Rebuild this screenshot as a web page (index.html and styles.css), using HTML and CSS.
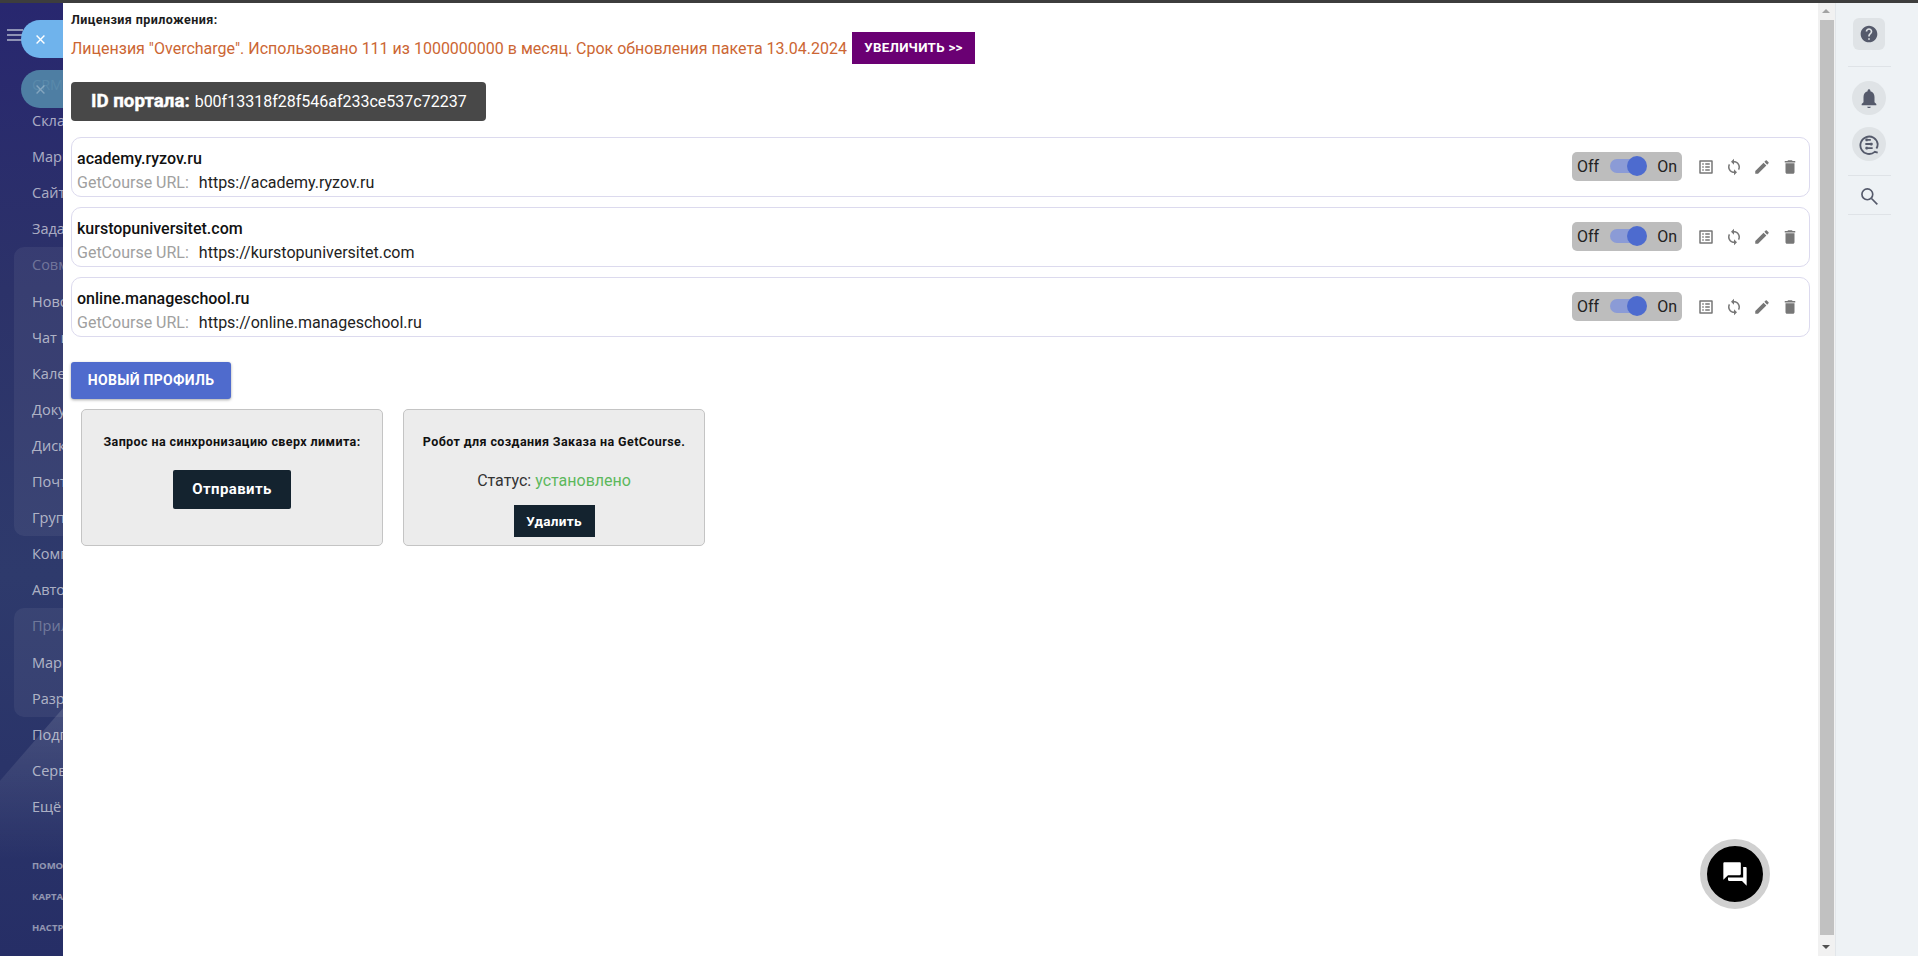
FILE: index.html
```html
<!DOCTYPE html>
<html lang="ru">
<head>
<meta charset="utf-8">
<title>Профили</title>
<link rel="stylesheet" href="styles.css">
</head>
<body>
<div class="topbar"></div>
<div class="app">
  <aside class="sidebar">
    <div class="side-shine"></div>
    <div class="burger"><i></i><i></i><i></i></div>
    <nav class="side-nav">
      <div class="side-item faint">CRM</div>
      <div class="side-item">Склад</div>
      <div class="side-item">Маркетинг</div>
      <div class="side-item">Сайты</div>
      <div class="side-item">Задачи</div>
      <div class="side-group">
        <div class="side-item dim">Совместная</div>
        <div class="side-item">Новости</div>
        <div class="side-item">Чат и звонки</div>
        <div class="side-item">Календарь</div>
        <div class="side-item">Документы</div>
        <div class="side-item">Диск</div>
        <div class="side-item">Почта</div>
        <div class="side-item">Группы</div>
      </div>
      <div class="side-item">Компания</div>
      <div class="side-item">Автоматизация</div>
      <div class="side-group short">
        <div class="side-item dim">Приложения</div>
        <div class="side-item">Маркет</div>
        <div class="side-item">Разработчикам</div>
      </div>
      <div class="side-item">Подписка</div>
      <div class="side-item">Сервисы</div>
      <div class="side-item">Ещё</div>
      <div class="side-links">
        <div class="side-link">ПОМОЩЬ</div>
        <div class="side-link">КАРТА САЙТА</div>
        <div class="side-link">НАСТРОЙКИ</div>
      </div>
    </nav>
    <div class="pill pill-a"><svg viewBox="0 0 14 14" class="x"><path d="M2 2l10 10M12 2L2 12"/></svg></div>
    <div class="pill pill-b"><svg viewBox="0 0 14 14" class="x"><path d="M2 2l10 10M12 2L2 12"/></svg></div>
  </aside>

  <main class="panel">
    <div class="lic-label">Лицензия приложения:</div>
    <div class="lic-line">
      <span class="lic-text">Лицензия "Overcharge". Использовано 111 из 1000000000 в месяц. Срок обновления пакета 13.04.2024</span>
      <span class="upgrade">УВЕЛИЧИТЬ &gt;&gt;</span>
    </div>
    <div class="portal"><b>ID портала:</b> b00f13318f28f546af233ce537c72237</div>

    <section class="row">
      <div class="row-info">
        <div class="row-name">academy.ryzov.ru</div>
        <div class="row-url"><span class="url-label">GetCourse URL:</span><span>https://academy.ryzov.ru</span></div>
      </div>
      <div class="switch-box"><span>Off</span><span class="switch"><i></i></span><span>On</span></div>
      <div class="actions">
        <svg viewBox="0 0 24 24"><path d="M19 5v14H5V5h14m1.1-2H3.9c-.5 0-.9.4-.9.9v16.2c0 .4.4.9.9.9h16.2c.4 0 .9-.5.9-.9V3.9c0-.5-.5-.9-.9-.9zM11 7h6v2h-6V7zm0 4h6v2h-6v-2zm0 4h6v2h-6zM7 7h2v2H7zm0 4h2v2H7zm0 4h2v2H7z"/></svg>
        <svg viewBox="0 0 24 24"><path d="M12 4V1L8 5l4 4V6c3.31 0 6 2.69 6 6 0 1.01-.25 1.97-.7 2.8l1.46 1.46C19.54 15.03 20 13.57 20 12c0-4.42-3.58-8-8-8zm0 14c-3.31 0-6-2.69-6-6 0-1.01.25-1.97.7-2.8L5.24 7.74C4.46 8.97 4 10.43 4 12c0 4.42 3.58 8 8 8v3l4-4-4-4v3z"/></svg>
        <svg viewBox="0 0 24 24"><path d="M3 17.25V21h3.75L17.81 9.94l-3.75-3.75L3 17.25zM20.71 7.04c.39-.39.39-1.02 0-1.41l-2.34-2.34c-.39-.39-1.02-.39-1.41 0l-1.83 1.83 3.75 3.75 1.83-1.83z"/></svg>
        <svg viewBox="0 0 24 24"><path d="M6 19c0 1.1.9 2 2 2h8c1.1 0 2-.9 2-2V7H6v12zM19 4h-3.5l-1-1h-5l-1 1H5v2h14V4z"/></svg>
      </div>
    </section>

    <section class="row">
      <div class="row-info">
        <div class="row-name">kurstopuniversitet.com</div>
        <div class="row-url"><span class="url-label">GetCourse URL:</span><span>https://kurstopuniversitet.com</span></div>
      </div>
      <div class="switch-box"><span>Off</span><span class="switch"><i></i></span><span>On</span></div>
      <div class="actions">
        <svg viewBox="0 0 24 24"><path d="M19 5v14H5V5h14m1.1-2H3.9c-.5 0-.9.4-.9.9v16.2c0 .4.4.9.9.9h16.2c.4 0 .9-.5.9-.9V3.9c0-.5-.5-.9-.9-.9zM11 7h6v2h-6V7zm0 4h6v2h-6v-2zm0 4h6v2h-6zM7 7h2v2H7zm0 4h2v2H7zm0 4h2v2H7z"/></svg>
        <svg viewBox="0 0 24 24"><path d="M12 4V1L8 5l4 4V6c3.31 0 6 2.69 6 6 0 1.01-.25 1.97-.7 2.8l1.46 1.46C19.54 15.03 20 13.57 20 12c0-4.42-3.58-8-8-8zm0 14c-3.31 0-6-2.69-6-6 0-1.01.25-1.97.7-2.8L5.24 7.74C4.46 8.97 4 10.43 4 12c0 4.42 3.58 8 8 8v3l4-4-4-4v3z"/></svg>
        <svg viewBox="0 0 24 24"><path d="M3 17.25V21h3.75L17.81 9.94l-3.75-3.75L3 17.25zM20.71 7.04c.39-.39.39-1.02 0-1.41l-2.34-2.34c-.39-.39-1.02-.39-1.41 0l-1.83 1.83 3.75 3.75 1.83-1.83z"/></svg>
        <svg viewBox="0 0 24 24"><path d="M6 19c0 1.1.9 2 2 2h8c1.1 0 2-.9 2-2V7H6v12zM19 4h-3.5l-1-1h-5l-1 1H5v2h14V4z"/></svg>
      </div>
    </section>

    <section class="row">
      <div class="row-info">
        <div class="row-name">online.manageschool.ru</div>
        <div class="row-url"><span class="url-label">GetCourse URL:</span><span>https://online.manageschool.ru</span></div>
      </div>
      <div class="switch-box"><span>Off</span><span class="switch"><i></i></span><span>On</span></div>
      <div class="actions">
        <svg viewBox="0 0 24 24"><path d="M19 5v14H5V5h14m1.1-2H3.9c-.5 0-.9.4-.9.9v16.2c0 .4.4.9.9.9h16.2c.4 0 .9-.5.9-.9V3.9c0-.5-.5-.9-.9-.9zM11 7h6v2h-6V7zm0 4h6v2h-6v-2zm0 4h6v2h-6zM7 7h2v2H7zm0 4h2v2H7zm0 4h2v2H7z"/></svg>
        <svg viewBox="0 0 24 24"><path d="M12 4V1L8 5l4 4V6c3.31 0 6 2.69 6 6 0 1.01-.25 1.97-.7 2.8l1.46 1.46C19.54 15.03 20 13.57 20 12c0-4.42-3.58-8-8-8zm0 14c-3.31 0-6-2.69-6-6 0-1.01.25-1.97.7-2.8L5.24 7.74C4.46 8.97 4 10.43 4 12c0 4.42 3.58 8 8 8v3l4-4-4-4v3z"/></svg>
        <svg viewBox="0 0 24 24"><path d="M3 17.25V21h3.75L17.81 9.94l-3.75-3.75L3 17.25zM20.71 7.04c.39-.39.39-1.02 0-1.41l-2.34-2.34c-.39-.39-1.02-.39-1.41 0l-1.83 1.83 3.75 3.75 1.83-1.83z"/></svg>
        <svg viewBox="0 0 24 24"><path d="M6 19c0 1.1.9 2 2 2h8c1.1 0 2-.9 2-2V7H6v12zM19 4h-3.5l-1-1h-5l-1 1H5v2h14V4z"/></svg>
      </div>
    </section>

    <div class="new-profile">НОВЫЙ ПРОФИЛЬ</div>

    <div class="cards">
      <div class="card">
        <div class="card-title">Запрос на синхронизацию сверх лимита:</div>
        <div class="send">Отправить</div>
      </div>
      <div class="card">
        <div class="card-title">Робот для создания Заказа на GetCourse.</div>
        <div class="status">Статус: <span class="ok">установлено</span></div>
        <div class="remove">Удалить</div>
      </div>
    </div>

    <div class="chat">
      <svg viewBox="0 0 24 24"><path d="M21 6h-2v9H6v2c0 .55.45 1 1 1h11l4 4V7c0-.55-.45-1-1-1zm-4 6V3c0-.55-.45-1-1-1H3c-.55 0-1 .45-1 1v14l4-4h10c.55 0 1-.45 1-1z"/></svg>
    </div>
  </main>

  <div class="scrollbar">
    <div class="arrow up"></div>
    <div class="thumb"></div>
    <div class="arrow down"></div>
  </div>

  <aside class="rightbar">
    <div class="rb-help">
      <svg viewBox="0 0 24 24"><path d="M12 2C6.48 2 2 6.48 2 12s4.48 10 10 10 10-4.48 10-10S17.52 2 12 2zm1 17h-2v-2h2v2zm2.07-7.75l-.9.92C13.45 12.9 13 13.5 13 15h-2v-.5c0-1.1.45-2.1 1.17-2.83l1.24-1.26c.37-.36.59-.86.59-1.41 0-1.1-.9-2-2-2s-2 .9-2 2H8c0-2.21 1.79-4 4-4s4 1.79 4 4c0 .88-.36 1.68-.93 2.25z"/></svg>
    </div>
    <div class="rb-line first"></div>
    <div class="rb-round">
      <svg viewBox="0 0 24 24"><path d="M12 23c1.100 0 2-.5 2-1.500h-4c0 1 .9 1.500 2 1.500zm8-3v-1.500l-2-2V11c0-3.070-1.630-5.640-4.500-6.320V4c0-.83-.67-1.500-1.500-1.500s-1.500.67-1.500 1.500v.68C7.640 5.360 6 7.920 6 11v5.500l-2 2V20z"/></svg>
    </div>
    <div class="rb-round second">
      <svg viewBox="0 0 24 24" class="outline"><path d="M21.500 21.500l-3.200-.9A9.500 9.500 0 1 1 21.500 12c0 2-.5 3.600-1.400 5"/><path d="M8 7.500h6M8 12h8M8 16.500h8M9.500 6v3M14.500 10.500v3M9.500 15v3"/></svg>
    </div>
    <div class="rb-line"></div>
    <div class="rb-search">
      <svg viewBox="0 0 24 24" class="outline"><circle cx="10" cy="10" r="6.500"/><path d="M15 15l7 7"/></svg>
    </div>
    <div class="rb-line last"></div>
  </aside>
</div>
</body>
</html>
```

FILE: styles.css
```css
* { box-sizing: border-box; }
html, body { margin: 0; height: 100%; overflow: hidden; }
body { font-family: Roboto, "Liberation Sans", sans-serif; background: #fff; color: #111; display: flex; flex-direction: column; }

.topbar { height: 3px; background: #3d3d3d; flex: none; }
.app { flex: 1; display: flex; min-height: 0; }

/* left navigation */
.sidebar { width: 63px; flex: none; position: relative; overflow: hidden; background: linear-gradient(180deg, #28276f 0%, #2c3269 30%, #2e3a6c 60%, #262e66 100%); }
.side-shine { position: absolute; inset: 0; background: linear-gradient(180deg, rgba(255,255,255,.13) 74%, rgba(255,255,255,0) 90%); clip-path: polygon(100% 74%, 0 81.600%, 0 100%, 100% 100%); }
.burger { position: absolute; left: 7px; top: 26px; width: 16px; display: flex; flex-direction: column; gap: 3px; }
.burger i { display: block; height: 2px; background: #8f93b5; }
.side-nav { padding-top: 64px; width: 260px; font-family: "Open Sans", sans-serif; position: relative; }
.side-item { height: 36.1px; line-height: 36.1px; padding-left: 32px; font-size: 14.5px; color: rgba(255,255,255,.62); white-space: nowrap; }
.side-item.dim { color: rgba(255,255,255,.3); }
.side-item.faint { color: rgba(255,255,255,.25); }
.side-group { margin-left: 14px; background: rgba(255,255,255,.06); border-radius: 10px; }
.side-group .side-item { padding-left: 18px; }
.side-links { margin-top: 25px; }
.side-link { height: 31px; line-height: 31px; padding-left: 32px; font-size: 9.500px; font-weight: 700; color: rgba(255,255,255,.5); white-space: nowrap; }
.pill { position: absolute; left: 21px; width: 70px; height: 38px; border-radius: 19px; display: flex; align-items: center; padding-left: 14px; }
.pill-a { top: 17px; background: #6fb3ec; }
.pill-b { top: 67px; background: rgba(88,150,178,.78); }
.x { width: 11px; height: 11px; fill: none; stroke: #fff; stroke-width: 1.800; }
.pill-b .x { stroke: rgba(255,255,255,.3); }

/* main panel */
.panel { flex: 1; min-width: 0; background: #fff; padding: 0 8px; position: relative; }
.lic-label { font-size: 12.500px; font-weight: 700; letter-spacing: .42px; line-height: 14px; margin-top: 10px; color: #1c1c1c; }
.lic-line { display: flex; align-items: center; gap: 5px; margin-top: 5px; height: 32px; }
.lic-text { font-size: 16px; color: #cc6633; white-space: nowrap; }
.upgrade { width: 123px; height: 32px; background: #6a0073; color: #fff; font-size: 13.300px; font-weight: 700; line-height: 32px; text-align: center; letter-spacing: .3px; }
.portal { width: 415px; height: 39px; margin-top: 18px; background: #484848; color: #fff; border-radius: 4px; font-size: 16px; line-height: 39px; padding-left: 20px; white-space: nowrap; }
.portal b { font-size: 18.700px; font-weight: 700; -webkit-text-stroke: .4px #fff; margin-right: 1px; }

.row { display: flex; align-items: center; height: 60px; margin-top: 10px; padding: 0 5px; border: 1px solid #dcdaee; border-radius: 10px; }
.portal + .row { margin-top: 16px; }
.row-info { flex: 1; }
.row-name { font-size: 16px; font-weight: 500; line-height: 20px; color: #111; margin-top: 7px; }
.row-url { font-size: 16px; line-height: 20px; margin-top: 4px; color: #222; display: flex; gap: 10px; }
.url-label { color: #a0a0a0; }
.switch-box { width: 110px; height: 29px; margin-bottom: 2px; background: #bdbdbd; border-radius: 5px; display: flex; align-items: center; justify-content: space-between; padding: 0 5px; font-size: 16px; color: #222; }
.switch { width: 36px; height: 14px; border-radius: 7px; background: #8b9bd6; position: relative; display: block; }
.switch i { position: absolute; right: -1px; top: -3px; width: 20px; height: 20px; border-radius: 50%; background: #4d6bcf; }
.actions { display: flex; align-items: center; gap: 10px; margin-left: 15px; padding-right: 5px; }
.actions svg { width: 18px; height: 18px; fill: #777; display: block; }

.new-profile { width: 160px; height: 37px; margin-top: 25px; background: #4f6bcd; color: #fff; font-size: 14px; font-weight: 700; border-radius: 3px; line-height: 36px; text-align: center; box-shadow: 0 1px 3px rgba(0,0,0,.35); letter-spacing: .3px; }
.cards { display: flex; gap: 20px; margin: 10px 0 0 10px; }
.card { width: 302px; height: 137px; background: #ececec; border: 1px solid #c4c4c4; border-radius: 5px; display: flex; flex-direction: column; align-items: center; text-align: center; }
.card-title { font-size: 12.500px; font-weight: 700; letter-spacing: .4px; line-height: 14px; margin-top: 25px; color: #111; }
.send { width: 118px; height: 39px; margin-top: 21px; background: #14232f; color: #fff; border-radius: 2px; font-size: 15px; font-weight: 700; line-height: 39px; letter-spacing: .4px; }
.status { font-size: 16px; margin-top: 22px; line-height: 20px; color: #333; }
.ok { color: #5cb85c; }
.remove { width: 81px; height: 32px; margin-top: 14px; background: #14232f; color: #fff; font-size: 13.500px; font-weight: 700; line-height: 33px; letter-spacing: .3px; }

.chat { position: absolute; right: 48px; bottom: 47px; width: 70px; height: 70px; border-radius: 50%; background: #000; border: 7px solid #d0d0d0; display: flex; align-items: center; justify-content: center; }
.chat svg { width: 28px; height: 28px; fill: #fff; display: block; }

/* scrollbar */
.scrollbar { width: 17px; flex: none; background: #f1f1f1; display: flex; flex-direction: column; align-items: flex-start; }
.thumb { flex: 1; width: 14px; margin-left: 2px; background: #c1c1c1; }
.arrow { height: 17px; width: 17px; flex: none; position: relative; }
.arrow.down { height: 21px; }
.arrow.up::before, .arrow.down::before { content: ""; position: absolute; left: 4px; border-left: 4px solid transparent; border-right: 4px solid transparent; }
.arrow.up::before { top: 6px; border-bottom: 4px solid #a3a3a3; }
.arrow.down::before { top: 10px; border-top: 4px solid #505050; }

/* right bar */
.rightbar { width: 83px; flex: none; background: #eef2f5; border-left: 1px solid #e2e6ea; display: flex; flex-direction: column; align-items: center; padding-right: 16px; }
.rightbar svg { fill: #555a6b; display: block; }
.rb-help { width: 32px; height: 32px; margin-top: 15px; border-radius: 6px; background: #dfe3e6; display: flex; align-items: center; justify-content: center; }
.rb-help svg { width: 20px; height: 20px; }
.rb-line { width: 43px; height: 1px; background: #dfe3e7; margin-top: 14px; flex: none; }
.rb-line.first { margin-top: 16px; }
.rb-round { width: 34px; height: 34px; border-radius: 50%; background: #dfe3e6; margin-top: 14px; display: flex; align-items: center; justify-content: center; }
.rb-round.second { margin-top: 12px; }
.rb-round svg { width: 22px; height: 22px; }
.rb-search { margin-top: 10px; width: 20px; height: 20px; }
.rb-search svg { width: 20px; height: 20px; }
.rb-line.last { margin-top: 8px; }
.rightbar svg.outline { fill: none; stroke: #555a6b; stroke-width: 2; }
```
